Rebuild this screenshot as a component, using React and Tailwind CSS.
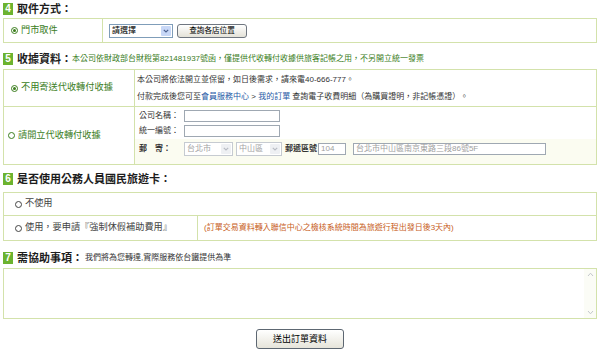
import React from "react";

const Badge = ({ n }) => (
  <span className="flex h-[12px] w-[10px] items-center justify-center bg-[#6cb32f] text-[10px] font-bold leading-none text-white">
    {n}
  </span>
);

const Heading = ({ n, title, note, noteClass }) => (
  <div className="flex h-[12px] items-center whitespace-nowrap">
    <Badge n={n} />
    <span className="ml-[4px] text-[11px] font-bold leading-[12px] text-[#1d1d1d]">{title}</span>
    {note && <span className={noteClass}>{note}</span>}
  </div>
);

// radio drawn as a small ring, dot when checked
const Radio = ({ checked }) => (
  <span className="mr-[3px] flex h-[7px] w-[7px] shrink-0 items-center justify-center rounded-full border border-current">
    {checked && <span className="h-[3px] w-[3px] rounded-full bg-current" />}
  </span>
);

const Chevron = ({ color }) => (
  <svg width="6" height="4" viewBox="0 0 6 4">
    <path d="M0.8 0.8 L3 3 L5.2 0.8" fill="none" stroke={color} strokeWidth="1.2" />
  </svg>
);

const Select = ({ label, className, disabled }) => (
  <div
    className={
      disabled
        ? "flex h-[14px] items-center border border-[#c6cbd1] bg-white text-[#a3a3a3] " + className
        : "flex h-[14px] items-center border border-[#7f9db9] bg-white text-black " + className
    }
  >
    <span className="flex-1 pl-[2px] text-[8px] leading-none">{label}</span>
    <span
      className={
        disabled
          ? "mr-[1px] flex h-[10px] w-[10px] items-center justify-center rounded-[1px] bg-[#eef0f3]"
          : "mr-[1px] flex h-[10px] w-[10px] items-center justify-center rounded-[1px] bg-[#c7d7f7]"
      }
    >
      <Chevron color={disabled ? "#b8bcc4" : "#4d6290"} />
    </span>
  </div>
);

const Field = ({ className, value }) => (
  <div className={"flex h-[12px] items-center border border-[#9fa8b2] bg-white pl-[2px] text-[8px] leading-none text-[#a0a0a0] " + className}>
    {value}
  </div>
);

export default function App() {
  return (
    <div className="h-[353px] w-[600px] overflow-hidden bg-white px-[3px] pt-[3px] font-['Liberation_Sans','Noto_Sans_CJK_TC',sans-serif]">
      {/* 4 取件方式 */}
      <Heading n="4" title="取件方式：" />
      <div className="mt-[3px] flex h-[25px] w-[594px] border border-[#d3e2ab]">
        <div className="flex w-[99px] items-center border-r border-[#d3e2ab] pl-[7px] text-[9.2px] text-[#3a7d1c]">
          <Radio checked />
          門市取件
        </div>
        <div className="flex items-center gap-[4px] pl-[6px]">
          <Select label="請選擇" className="w-[64px]" />
          <button className="h-[14px] w-[70px] rounded-[3px] border border-[#6f7680] bg-linear-to-b from-white to-[#e4e2d8] text-[7.6px] leading-none text-black">
            查詢各店位置
          </button>
        </div>
      </div>

      {/* 5 收據資料 */}
      <div className="mt-[10px]">
        <Heading
          n="5"
          title="收據資料："
          note="本公司依財政部台財稅第821481937號函，僅提供代收轉付收據供旅客記帳之用，不另開立統一發票"
          noteClass="text-[8px] leading-[12px] text-[#3a7d1c]"
        />
      </div>
      <div className="mt-[4px] w-[594px] border border-[#d3e2ab]">
        <div className="flex h-[37px] border-b border-[#d3e2ab]">
          <div className="flex w-[131px] items-center border-r border-[#d3e2ab] pl-[7px] text-[9.2px] text-[#3a7d1c]">
            <Radio checked />
            不用寄送代收轉付收據
          </div>
          <div className="flex flex-col justify-center pl-[2px] text-[8px] leading-[17px] text-[#333]">
            <span>本公司將依法開立並保留，如日後需求，請來電40-666-777。</span>
            <span>
              付款完成後您可至<span className="text-[#1f5aa6]">會員服務中心</span> &gt;{" "}
              <span className="text-[#1f5aa6]">我的訂單</span> 查詢電子收費明細（為購買證明，非記帳憑證）。
            </span>
          </div>
        </div>
        <div className="flex h-[57px]">
          <div className="flex w-[131px] items-center border-r border-[#d3e2ab] pl-[4px] text-[9.2px] text-[#3a7d1c]">
            <Radio />
            請開立代收轉付收據
          </div>
          <div className="flex flex-1 flex-col pt-[3px] text-[8px] text-[#333]">
            <div className="flex h-[12px] items-center pl-[4px]">
              <span className="w-[45px]">公司名稱：</span>
              <Field className="w-[96px]" />
            </div>
            <div className="mt-[3px] flex h-[12px] items-center pl-[4px]">
              <span className="w-[45px]">統一編號：</span>
              <Field className="w-[96px]" />
            </div>
            <div className="mt-[2px] flex flex-1 items-start bg-[#fbfcf1] pl-[4px] pt-[3px]">
              <div className="flex h-[14px] items-center">
                <span className="flex w-[45px] font-bold">
                  <span className="w-[16px]">郵</span>寄：
                </span>
                <Select label="台北市" className="w-[49px]" disabled />
                <Select label="中山區" className="ml-[3px] w-[46px]" disabled />
                <span className="ml-[3px] font-bold">郵遞區號</span>
                <Field className="ml-[1px] w-[28px]" value="104" />
                <Field className="ml-[7px] w-[193px]" value="台北市中山區南京東路三段86號5F" />
              </div>
            </div>
          </div>
        </div>
      </div>

      {/* 6 國民旅遊卡 */}
      <div className="mt-[8px]">
        <Heading n="6" title="是否使用公務人員國民旅遊卡：" />
      </div>
      <div className="mt-[7px] w-[594px] border border-[#d3e2ab]">
        <div className="flex h-[23px] items-center border-b border-[#d3e2ab] pl-[11px] text-[9.2px] text-[#444]">
          <Radio />
          不使用
        </div>
        <div className="flex h-[24px]">
          <div className="flex w-[194px] items-center border-r border-[#d3e2ab] pl-[11px] text-[9.2px] text-[#444]">
            <Radio />
            使用，要申請『強制休假補助費用』
          </div>
          <div className="flex items-center pl-[6px] text-[8px] text-[#c8601c]">
            (訂單交易資料轉入聯信中心之檢核系統時間為旅遊行程出發日後3天內)
          </div>
        </div>
      </div>

      {/* 7 需協助事項 */}
      <div className="mt-[11px]">
        <Heading
          n="7"
          title="需協助事項："
          note="我們將為您轉達,實際服務依台鐵提供為準"
          noteClass="ml-[2px] text-[8px] leading-[12px] text-[#333]"
        />
      </div>
      <div className="mt-[4px] flex h-[51px] w-[594px] border border-[#d3e2ab] bg-white">
        <div className="flex-1" />
        <div className="flex w-[12px] flex-col items-center justify-between bg-[#fbfcf6] py-[3px]">
          <svg width="7" height="5" viewBox="0 0 7 5">
            <path d="M1 4 L3.5 1.2 L6 4" fill="none" stroke="#c3c7cc" strokeWidth="1" />
          </svg>
          <svg width="7" height="5" viewBox="0 0 7 5">
            <path d="M1 1 L3.5 3.8 L6 1" fill="none" stroke="#c3c7cc" strokeWidth="1" />
          </svg>
        </div>
      </div>

      <div className="mt-[10px] flex w-[594px] justify-center">
        <button className="h-[20px] w-[88px] rounded-[3px] border border-[#5d6772] bg-linear-to-b from-white to-[#e6e4da] text-[9px] leading-none text-black">
          送出訂單資料
        </button>
      </div>
    </div>
  );
}
